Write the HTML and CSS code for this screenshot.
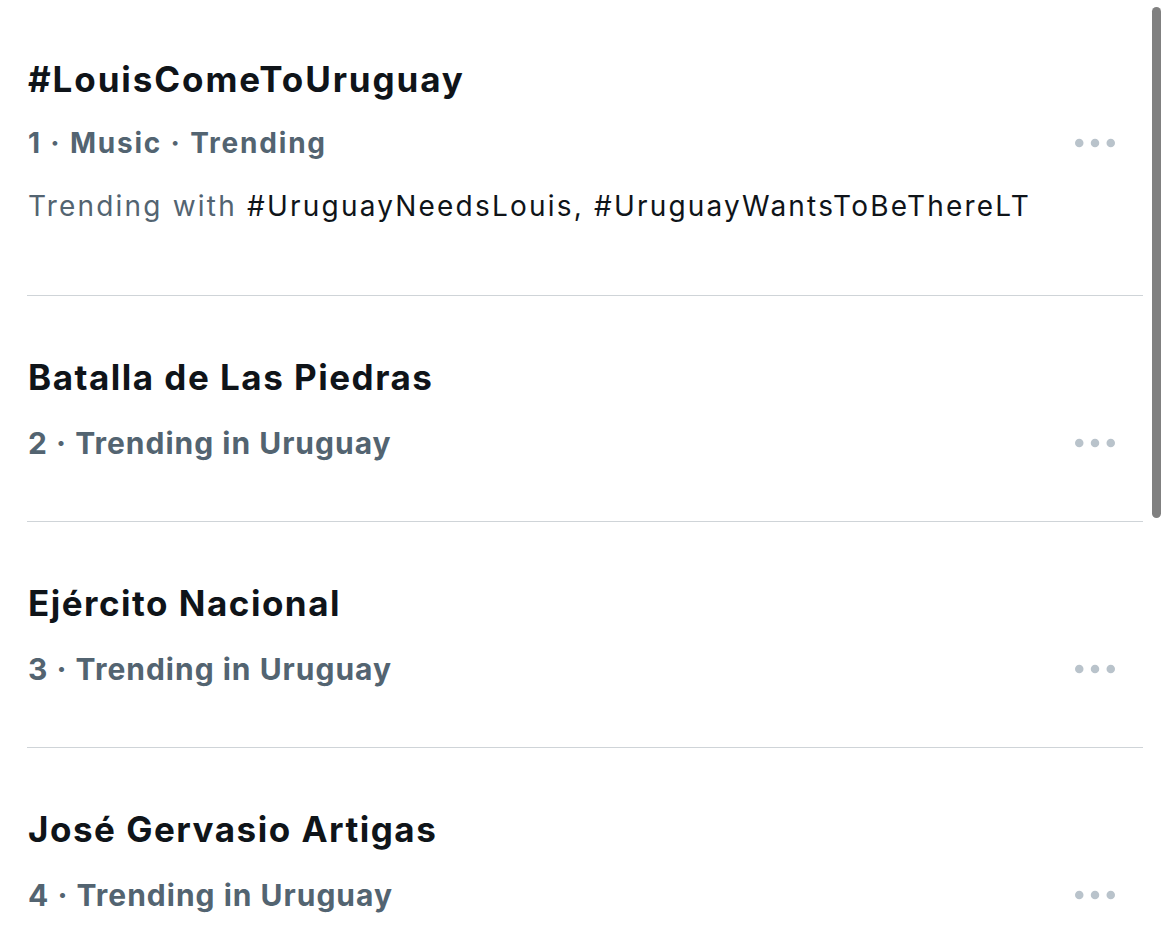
FILE: index.html
```html
<!DOCTYPE html>
<html lang="en">
<head>
<meta charset="utf-8">
<title>Trends</title>
<link rel="stylesheet" href="styles.css">
</head>
<body>
<main class="trends">
  <section class="trend trend-first">
    <h2 class="title title-first">#LouisComeToUruguay</h2>
    <div class="meta-row">
      <span class="meta meta-first">1 · Music · Trending</span>
      <svg class="more" viewBox="0 0 40 10" width="40" height="10" aria-hidden="true"><circle cx="4.25" cy="5" r="4.25"/><circle cx="20" cy="5" r="4.25"/><circle cx="35.75" cy="5" r="4.25"/></svg>
    </div>
    <p class="with">Trending with <span class="tag">#UruguayNeedsLouis, #UruguayWantsToBeThereLT</span></p>
  </section>
  <section class="trend">
    <h2 class="title">Batalla de Las Piedras</h2>
    <div class="meta-row">
      <span class="meta">2 · Trending in Uruguay</span>
      <svg class="more" viewBox="0 0 40 10" width="40" height="10" aria-hidden="true"><circle cx="4.25" cy="5" r="4.25"/><circle cx="20" cy="5" r="4.25"/><circle cx="35.75" cy="5" r="4.25"/></svg>
    </div>
  </section>
  <section class="trend">
    <h2 class="title">Ejército Nacional</h2>
    <div class="meta-row">
      <span class="meta">3 · Trending in Uruguay</span>
      <svg class="more" viewBox="0 0 40 10" width="40" height="10" aria-hidden="true"><circle cx="4.25" cy="5" r="4.25"/><circle cx="20" cy="5" r="4.25"/><circle cx="35.75" cy="5" r="4.25"/></svg>
    </div>
  </section>
  <section class="trend trend-last">
    <h2 class="title">José Gervasio Artigas</h2>
    <div class="meta-row">
      <span class="meta">4 · Trending in Uruguay</span>
      <svg class="more" viewBox="0 0 40 10" width="40" height="10" aria-hidden="true"><circle cx="4.25" cy="5" r="4.25"/><circle cx="20" cy="5" r="4.25"/><circle cx="35.75" cy="5" r="4.25"/></svg>
    </div>
  </section>
</main>
<div class="scrollbar"></div>
</body>
</html>
```
FILE: styles.css
```css
html, body {
  margin: 0;
  padding: 0;
  background: #ffffff;
}
body {
  width: 1170px;
  height: 950px;
  overflow: hidden;
  font-family: Inter, "Liberation Sans", sans-serif;
  color: #0f1419;
}
.trends {
  margin-left: 27px;
  width: 1116px;
  display: flex;
  flex-direction: column;
}
.trend {
  display: flex;
  flex-direction: column;
  padding: 60.3px 0 59.6px 1px;
  border-bottom: 1px solid #cfd4d8;
}
.trend-first {
  padding-top: 58.3px;
  padding-bottom: 73.2px;
}
.trend-last {
  border-bottom: none;
}
.title {
  margin: 0;
  font-size: 35px;
  line-height: 42px;
  font-weight: 700;
  letter-spacing: 1.5px;
  color: #0f1419;
}
.title-first {
  letter-spacing: 1.9px;
}
.meta-row {
  display: flex;
  align-items: center;
  justify-content: space-between;
  margin-top: 27.1px;
  padding-right: 28px;
}
.trend-first .meta-row {
  margin-top: 26.5px;
}
.meta {
  font-size: 30px;
  line-height: 36px;
  font-weight: 700;
  letter-spacing: 1px;
  color: #536471;
}
.meta-first {
  font-size: 28px;
  line-height: 32px;
  letter-spacing: 1.8px;
}
.more {
  display: block;
  fill: #b9c3cb;
}
.with {
  margin: 31px 0 0;
  font-size: 28px;
  line-height: 32px;
  font-weight: 400;
  letter-spacing: 2.2px;
  color: #536471;
}
.tag {
  color: #0f1419;
}
.scrollbar {
  position: absolute;
  left: 1152px;
  top: 7px;
  width: 9px;
  height: 511px;
  border-radius: 5px;
  background: #808080;
}
```
